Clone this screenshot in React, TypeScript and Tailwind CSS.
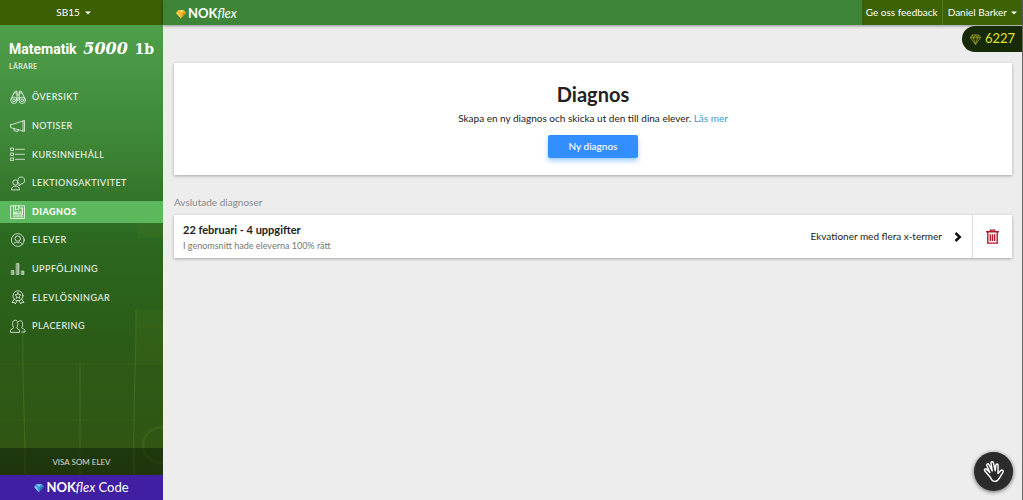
import React from "react";

type IconProps = { children: React.ReactNode };

function NavIcon({ children }: IconProps) {
    return (
        <svg
            viewBox="0 0 16 16"
            className="w-4 h-4 shrink-0 overflow-visible"
            fill="none"
            stroke="currentColor"
            strokeWidth="0.8"
            strokeLinecap="round"
            strokeLinejoin="round"
            aria-hidden="true"
        >
            {children}
        </svg>
    );
}

const NAV_ITEMS: { label: string; active?: boolean; icon: React.ReactNode }[] = [
    {
        label: "Översikt",
        icon: (
            <>
                <circle cx="4" cy="11.3" r="3.2" />
                <circle cx="4" cy="11.3" r="1.4" />
                <circle cx="12.2" cy="11.3" r="3.2" />
                <circle cx="12.2" cy="11.3" r="1.4" />
                <path d="M1 10.2 4 4l1-1.8h2V11M15.2 10.2 12.2 4l-1-1.8h-2V11M4 4h3M9.2 4h3M7 6h2.2M7 9h2.2" />
            </>
        ),
    },
    {
        label: "Notiser",
        icon: (
            <path d="M.5 7v2.5L4 10.6l10.5 2.9V2.5L.5 7ZM4 10.6v2l3.8 1 .6-1.8M13 3v10" />
        ),
    },
    {
        label: "Kursinnehåll",
        icon: (
            <path d="M1 2h2.5v2.5H1zM1 7h2.5v2.5H1zM1 12h2.5v2.5H1zM5.5 3.3h9M5.5 8.3h9M5.5 13.3h9" />
        ),
    },
    {
        label: "Lektionsaktivitet",
        icon: (
            <>
                <circle cx="5.4" cy="7.5" r="2.6" />
                <path d="M1.5 14.5c.3-2 1-3 2.8-3.3h2.4c1.7.3 2.4 1.3 2.8 3.3ZM8 5.5C7.6 3.2 9 2 11 2c2.2 0 3.6 1.2 3.6 3.4 0 2.2-1.5 3.5-3.6 3.5L9.2 11l-.3-2.6" />
            </>
        ),
    },
    {
        label: "Diagnos",
        active: true,
        icon: (
            <>
                <path d="M1 1.8h13.5v12.7H1zM3.5 1.8v9.3h8.8V4M3.5 9h3.2M5.5 1.8v4.4l1.7-1.3 1.6 1.3V1.8M9.7 4h2.6v7.1" />
                <path d="M4.5 8h6.5M4.5 9.7h6.5M3 12.8h10" />
            </>
        ),
    },
    {
        label: "Elever",
        icon: (
            <>
                <circle cx="7.8" cy="8" r="6.4" />
                <circle cx="7.8" cy="6.6" r="2.7" />
                <path d="M3.3 12.2c.8-1.3 1.8-1.8 3-2.1.8 1 2.2 1 3 0 1.2.3 2.2.8 3 2.1" />
            </>
        ),
    },
    {
        label: "Uppföljning",
        icon: (
            <path
                d="M1.5 9.5H4v4H1.5zM6.5 2.5H9v11H6.5zM11.500 10H14v3.500h-2.500z"
                fill="currentColor"
                fillOpacity="0.6"
                strokeOpacity="0.6"
            />
        ),
    },
    {
        label: "Elevlösningar",
        icon: (
            <>
                <circle cx="8" cy="6.8" r="5" />
                <path d="m8 3.8.9 1.8 2 .3-1.5 1.4.4 2L8 8.4l-1.8.9.4-2-1.5-1.4 2-.3zM4.2 10.2 2 13.5l2.3-.2.9 1.7 2-3.3M11.8 10.2l2.2 3.3-2.3-.2-.9 1.7-2-3.3" />
            </>
        ),
    },
    {
        label: "Placering",
        icon: (
            <path d="M.5 14v-1.8c0-1 2.800-1.300 3-2.200 0-1-1-2-1-4.300 0-2.200 1-3.500 2.700-3.500s2.600 1.300 2.600 3.500C7.800 8 6.800 9 6.800 10c.2.9 2.700 1.200 2.700 2.200V14ZM8.500 3.400c.4-.4 1-.6 1.800-.6 1.600 0 2.400 1.100 2.400 3.100 0 2.100-.9 3-.9 3.900.3.9 3.200 1.200 3.200 2.400V14h-3.300" />
        ),
    },
];

function Gem({ className, light, mid, dark }: { className: string; light: string; mid: string; dark: string }) {
    return (
        <svg viewBox="0 0 12 11" className={className} aria-hidden="true">
            <path d="M2.5 1h7L12 4 6 11 0 4z" fill={mid} />
            <path d="M2.5 1 6 4l3.5-3zM0 4h3.5L6 11z" fill={light} />
            <path d="M8.5 4H12l-6 7z" fill={dark} />
        </svg>
    );
}

function Caret() {
    return (
        <svg viewBox="0 0 6 4" className="w-[6px] h-1" fill="currentColor" aria-hidden="true">
            <path d="M0 .5h6l-3 3z" />
        </svg>
    );
}

function Sidebar() {
    return (
        <aside className="w-[163px] shrink-0 flex flex-col text-white bg-[#2b5a1a]">
            <button className="h-[25px] shrink-0 bg-[#3c5f04] text-[10px] flex items-center justify-center gap-[5px] pr-4">
                SB15
                <Caret />
            </button>

            <div className="relative flex-1 flex flex-col bg-[linear-gradient(180deg,#4f9f4b_0%,#3f8739_25%,#2b6820_48%,#2b5c17_70%,#325413_100%)]">
                {/* Faint chalkboard grid behind the lower menu */}
                <svg
                    viewBox="0 0 163 450"
                    preserveAspectRatio="none"
                    className="absolute inset-0 w-full h-full pointer-events-none"
                    fill="none"
                    stroke="#7c9a1e"
                    aria-hidden="true"
                >
                    <path d="M23 305c-1 50 2 80 2 144M80 338v111M136 285c0 60-3 100-2 164" strokeOpacity="0.3" />
                    <path d="M0 339h136M0 395h136M136 302h27" strokeOpacity="0.12" />
                    <path d="M138 183h25v30h-25zM136 285h27v55h-27z" fill="#7c9a1e" fillOpacity="0.08" stroke="none" />
                    <path d="M163 402c-12 0-20 8-20 18s8 18 20 18" strokeWidth="3" strokeOpacity="0.15" />
                </svg>

                <div className="relative px-[9px] pt-[14px]">
                    <h2 className="flex items-baseline justify-between h-5 leading-5 whitespace-nowrap">
                        <span className="font-['Roboto'] font-bold text-[14px]">Matematik</span>
                        <span className="font-['DejaVu_Serif'] font-black italic text-[16px]">5000</span>
                        <span className="font-['DejaVu_Serif'] font-bold text-[14px]">1b</span>
                    </h2>
                    <p className="mt-[2px] text-[7px] leading-[10px] font-bold uppercase tracking-wider text-white/80">Lärare</p>
                </div>

                <nav className="relative mt-[15px] h-[251px] flex flex-col justify-between">
                    {NAV_ITEMS.map((item) => (
                        <a
                            key={item.label}
                            href="#"
                            className={`flex items-center gap-[6px] h-[22px] pl-[10px] text-[9px] uppercase tracking-wider ${
                                item.active ? "bg-[#5cb85c] font-black" : "font-medium text-white/90"
                            }`}
                        >
                            <NavIcon>{item.icon}</NavIcon>
                            {item.label}
                        </a>
                    ))}
                </nav>

                <a
                    href="#"
                    className="relative mt-auto h-[27px] flex items-center justify-center bg-black/35 text-[8px] uppercase text-white/80"
                >
                    Visa som elev
                </a>
            </div>

            <a href="#" className="h-[25px] shrink-0 flex items-center justify-center gap-[2px] bg-[#411fa3] text-[13px]">
                <Gem className="w-[10px] h-[10px]" light="#8fd0f5" mid="#3f92dc" dark="#2a63b8" />
                <span>
                    <b className="font-bold">NOK</b>
                    <i>flex</i> Code
                </span>
            </a>
        </aside>
    );
}

function TopBar() {
    return (
        <header className="relative h-[25px] shrink-0 flex items-stretch bg-[#3e853a] text-white text-[10px] shadow-[0_1px_3px_rgba(0,0,0,0.4)]">
            <a href="#" className="flex items-center gap-[2px] pl-[13px] pt-[2px] text-[13px]">
                <Gem className="w-[10px] h-[10px]" light="#ffd75a" mid="#f5b52a" dark="#d98e12" />
                <span>
                    <b className="font-bold">NOK</b>
                    <i>flex</i>
                </span>
            </a>
            <button className="ml-auto px-1 bg-[#3c6205]">Ge oss feedback</button>
            <button className="px-[5px] flex items-center gap-1 bg-[#3c6205] border-l border-[#557a22]">
                Daniel Barker
                <Caret />
            </button>
        </header>
    );
}

export default function App() {
    return (
        <div className="min-h-screen flex bg-[#ededed] font-[Lato,sans-serif] text-[#222]">
            <Sidebar />

            <div className="relative flex-1 flex flex-col min-w-0 border-r border-[#666]">
                <TopBar />

                {/* Points */}
                <div className="absolute right-0 top-[26px] h-[26px] w-[60px] pl-2 flex items-center gap-[4px] rounded-l-full bg-[#152a05] text-[#e6e32c] text-[13px]">
                    <svg viewBox="0 0 12 12" className="w-[11px] h-[11px]" fill="none" stroke="#b3b026" strokeWidth="0.8" strokeLinejoin="round" aria-hidden="true">
                        <path d="M2.5 1h7l2 3L6 11.3.5 4zM.5 4h11M2.5 1l1.3 3L6 1l2.2 3 1.3-3M3.8 4 6 11.3 8.2 4" />
                    </svg>
                    6227
                </div>

                <main className="flex-1 pl-[11px] pr-[10px] pt-[38px]">
                    <section className="h-[112px] flex flex-col items-center bg-white pt-[18px] shadow-[0_1px_3px_rgba(0,0,0,0.3)]">
                        <h1 className="text-[20px] leading-[26px] font-bold">Diagnos</h1>
                        <p className="mt-[4px] text-[10px] leading-[14px]">
                            Skapa en ny diagnos och skicka ut den till dina elever.{" "}
                            <a href="#" className="text-[#4299d4]">Läs mer</a>
                        </p>
                        <button className="mt-[10px] h-[23px] w-[90px] rounded-[2px] bg-[#338fff] text-white text-[10px] font-medium shadow-[0_3px_5px_rgba(51,143,255,0.45)]">
                            Ny diagnos
                        </button>
                    </section>

                    <h2 className="mt-[20px] text-[10px] leading-[14px] text-[#888]">Avslutade diagnoser</h2>

                    <article className="mt-[6px] h-[43px] flex bg-white shadow-[0_1px_3px_rgba(0,0,0,0.3)]">
                        <a href="#" className="flex-1 flex items-center justify-between pl-[9px] pr-[10px]">
                            <div className="pt-[2px]">
                                <h3 className="text-[11px] leading-4 font-bold">22 februari - 4 uppgifter</h3>
                                <p className="text-[9px] leading-4 text-[#777]">I genomsnitt hade eleverna 100% rätt</p>
                            </div>
                            <div className="flex items-center gap-[12px] text-[10px]">
                                Ekvationer med flera x-termer
                                <svg viewBox="0 0 8 10" className="w-2 h-[10px]" fill="none" stroke="#111" strokeWidth="2.4" aria-hidden="true">
                                    <path d="m1.5 1 4.3 4-4.3 4" />
                                </svg>
                            </div>
                        </a>
                        <button aria-label="Ta bort" className="w-10 flex items-center justify-center border-l border-[#ddd]">
                            <svg viewBox="0 0 12 14" className="w-[13px] h-[15px]" fill="none" stroke="#b7172a" strokeWidth="1.3" aria-hidden="true">
                                <path d="M0 2.5h12M4 2.3V1h4v1.3M1.6 3v10.2h8.8V3M4 4.8v6.5M6 4.8v6.5M8 4.8v6.5" />
                            </svg>
                        </button>
                    </article>
                </main>
            </div>

            <button
                aria-label="Hjälp"
                className="fixed right-[10px] bottom-[9px] w-[39px] h-[39px] rounded-full flex items-center justify-center bg-[#2b2b2b] shadow-[0_1px_4px_rgba(0,0,0,0.6)]"
            >
                <svg viewBox="0 0 24 24" className="w-6 h-6" fill="none" stroke="white" strokeWidth="1.4" strokeLinecap="round" strokeLinejoin="round" aria-hidden="true">
                    <path d="M8.500 17.500 2.700 10.800c-.9-1.300.8-2.600 1.900-1.500l3.300 3.300L4.800 5.500c-.5-1.500 1.500-2.300 2.200-.9l3.200 6.300L9 3c-.1-1.500 2-1.800 2.400-.3l1.800 8 .7-5.700c.3-1.400 2.200-1.200 2.200.3l-.1 8.200 2.800-3c1.300-1.200 3.200.2 2.200 1.700l-3.600 5.900c-1.200 2.100-2.500 3.300-4.700 3.300-2 0-3.200-1.300-4.200-3.900z" />
                </svg>
            </button>
        </div>
    );
}
